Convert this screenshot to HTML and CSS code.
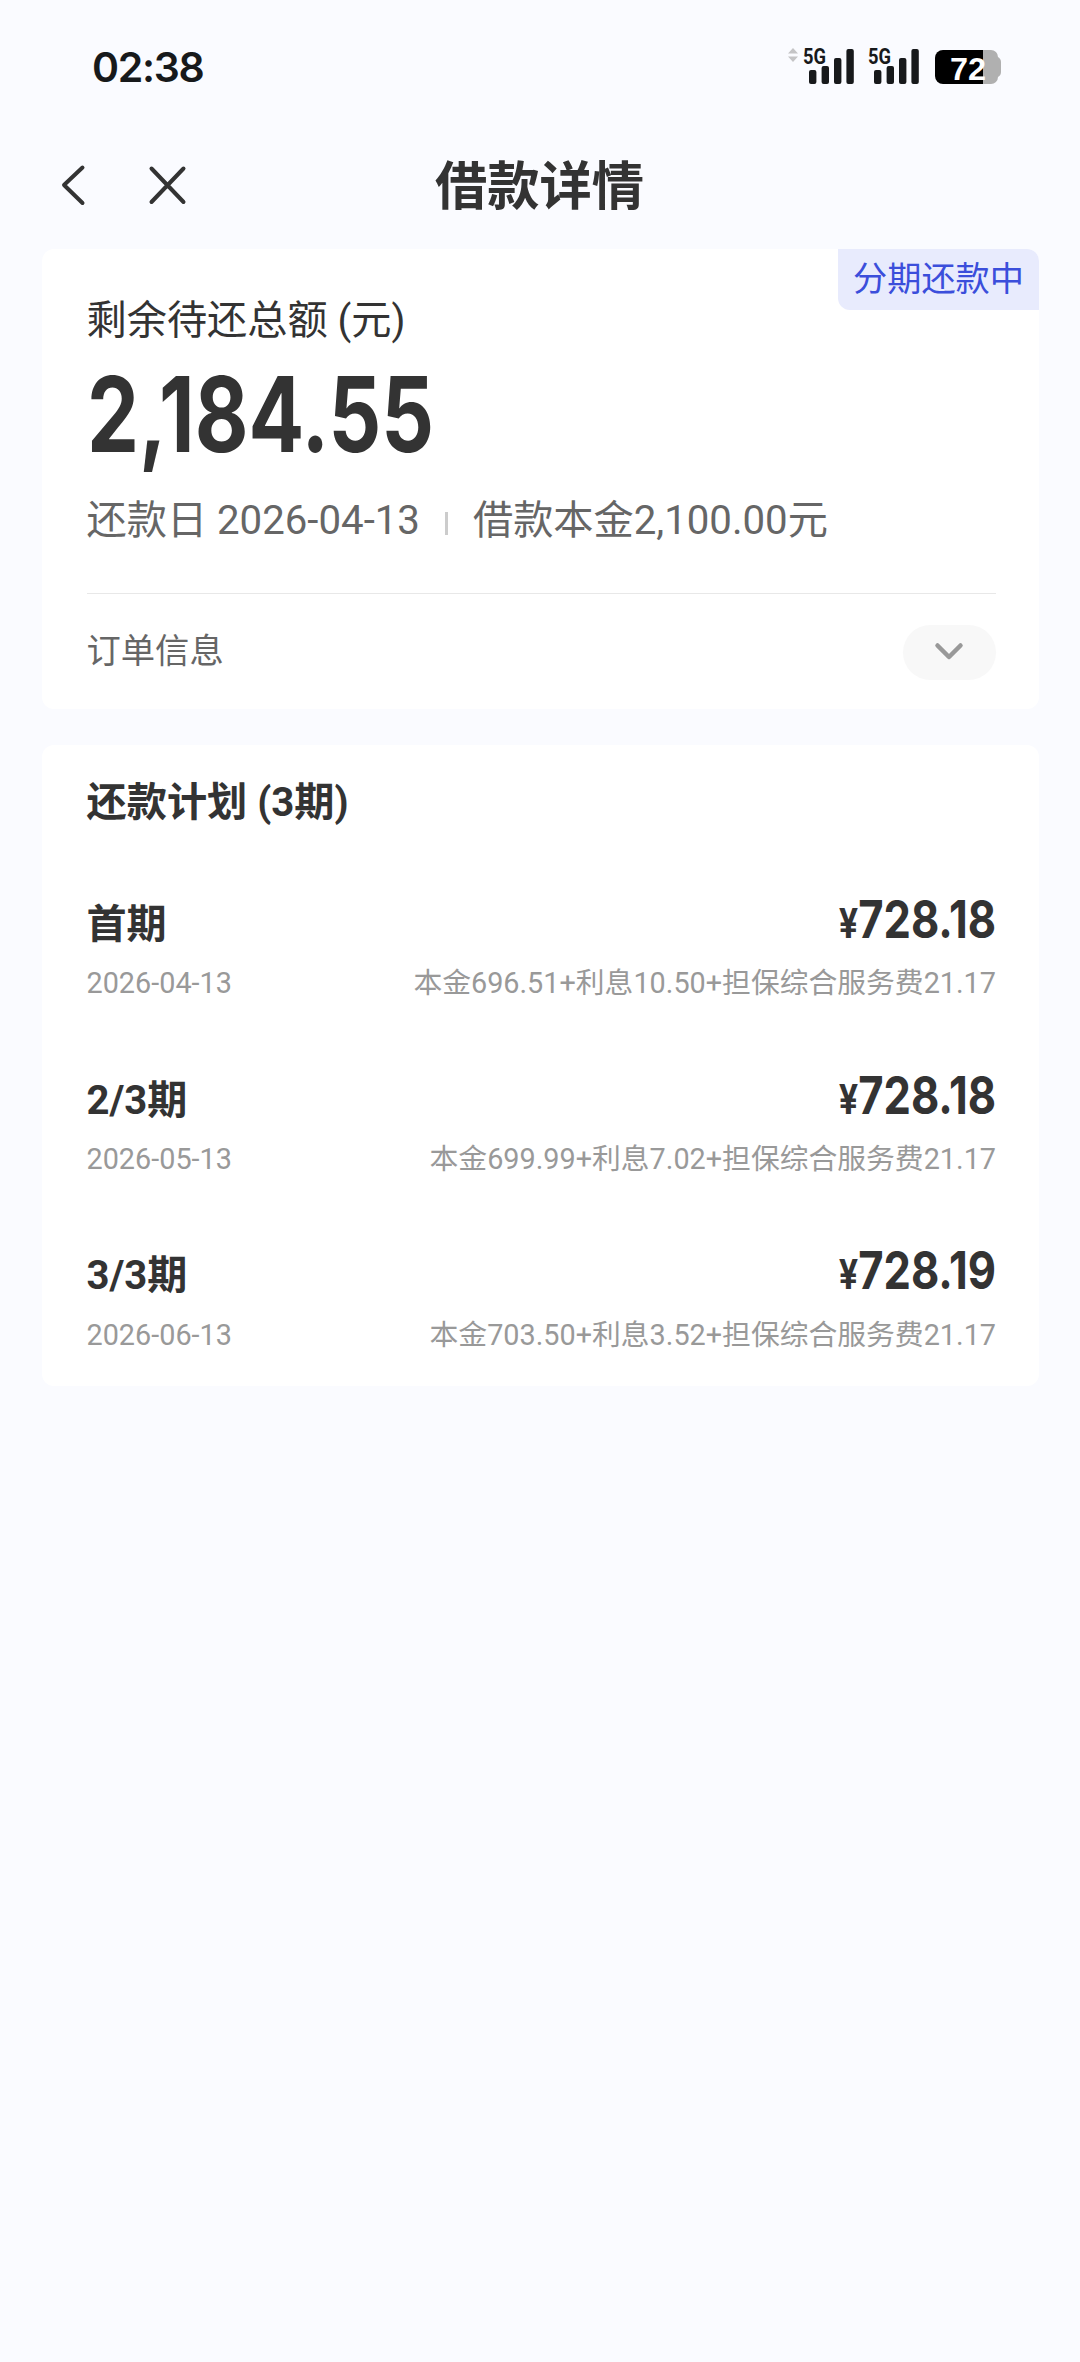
FILE: index.html
```html
<!DOCTYPE html>
<html lang="zh-CN">
<head>
<meta charset="utf-8">
<title>借款详情</title>
<link rel="stylesheet" href="styles.css">
</head>
<body>
<div class="status">
  <span class="clock">02:38</span>
  <div class="status-icons">
    <svg class="data" width="10" height="14" viewBox="0 0 10 14"><path d="M5 0 10 5.500H0zM0 8.500h10L5 14z"/></svg>
    <svg class="signal" width="52" height="42" viewBox="0 -4 52 42"><text x="0" y="17.500" textLength="23" lengthAdjust="spacingAndGlyphs">5G</text><rect x="6" y="24" width="7.400" height="14" rx="2"/><rect x="18.600" y="20" width="7.400" height="18" rx="2"/><rect x="31" y="12" width="7.400" height="26" rx="2"/><rect x="43.400" y="3" width="7.400" height="35" rx="2"/></svg>
    <svg class="signal" width="52" height="42" viewBox="0 -4 52 42"><text x="0" y="17.500" textLength="23" lengthAdjust="spacingAndGlyphs">5G</text><rect x="6" y="24" width="7.400" height="14" rx="2"/><rect x="18.600" y="20" width="7.400" height="18" rx="2"/><rect x="31" y="12" width="7.400" height="26" rx="2"/><rect x="43.400" y="3" width="7.400" height="35" rx="2"/></svg>
    <svg class="battery" width="66" height="40" viewBox="0 0 66 40"><path class="rest" d="M48 0h8a7 7 0 0 1 7 7c2 1 3 3 3 5v10c0 2-1 4-3 5a7 7 0 0 1-7 7h-8z"/><path d="M8 0h40v34H8a8 8 0 0 1-8-8V8a8 8 0 0 1 8-8z"/><text x="15" y="29.500" textLength="36" lengthAdjust="spacingAndGlyphs">72</text></svg>
  </div>
</div>
<header class="nav">
  <div class="nav-actions">
    <svg width="26" height="44" viewBox="0 0 26 44"><path d="M22.500 4.500 4 22 22.500 40"/></svg>
    <svg width="44" height="44" viewBox="0 0 44 44"><path d="M5.500 5.500 37.500 39M37.500 5.500 5.500 39"/></svg>
  </div>
  <h1>借款详情</h1>
  <div></div>
</header>
<main>
  <section class="card summary">
    <span class="badge">分期还款中</span>
    <div class="label">剩余待还总额 (元)</div>
    <div class="total"><span>2,184.55</span></div>
    <div class="meta"><span>还款日 2026-04-13</span><i class="bar"></i><span>借款本金2,100.00元</span></div>
    <hr>
    <div class="order"><span class="order-text">订单信息</span><span class="pill"><svg width="32" height="22" viewBox="0 0 32 22"><path d="M3.500 3.500 15 15 26.500 3.500"/></svg></span></div>
  </section>
  <section class="card plan">
    <h2>还款计划 (3期)</h2>
    <ul>
      <li>
        <div class="row"><span class="term">首期</span><span class="amount"><small>¥</small>728.18</span></div>
        <div class="detail"><span>2026-04-13</span><span>本金696.51+利息10.50+担保综合服务费21.17</span></div>
      </li>
      <li>
        <div class="row"><span class="term">2/3期</span><span class="amount"><small>¥</small>728.18</span></div>
        <div class="detail"><span>2026-05-13</span><span>本金699.99+利息7.02+担保综合服务费21.17</span></div>
      </li>
      <li>
        <div class="row"><span class="term">3/3期</span><span class="amount"><small>¥</small>728.19</span></div>
        <div class="detail"><span>2026-06-13</span><span>本金703.50+利息3.52+担保综合服务费21.17</span></div>
      </li>
    </ul>
  </section>
</main>
</body>
</html>
```
FILE: styles.css
```css
* { box-sizing: border-box; }
body {
  margin: 0;
  min-height: 2362px;
  background: #fafbff;
  color: #333;
  font-family: Roboto, "Noto Sans CJK SC", sans-serif;
}
h1, h2, ul { margin: 0; padding: 0; list-style: none; }

.status {
  display: flex;
  justify-content: space-between;
  height: 120px;
  padding: 46px 79px 0 92px;
}
.clock {
  font: 600 41px/42px Inter, sans-serif;
  letter-spacing: -1.3px;
  color: #17191b;
}
.status-icons { display: flex; align-items: flex-start; }
.data { margin: 2px 5px 0 0; fill: #c4c4c6; }
.signal { margin: -4px 13px 0 0; fill: #17191b; }
.signal + .battery { margin-left: 2px; }
.signal text { font: 700 21.5px Roboto, sans-serif; }
.battery { margin-top: 4px; }
.battery .rest { fill: #b0b0b0; }
.battery text { font: 700 31px "Liberation Sans", sans-serif; fill: #fff; }

.nav {
  display: grid;
  grid-template-columns: 1fr auto 1fr;
  align-items: center;
  height: 129px;
  padding: 0 61px 0 60px;
}
.nav-actions { display: flex; gap: 60px; }
.nav svg { fill: none; stroke: #333; stroke-width: 4; stroke-linecap: round; stroke-linejoin: round; }
.nav h1 { padding-top: 5px; font-size: 52.3px; line-height: 72px; font-weight: 700; }

main { display: grid; gap: 36px; padding: 0 41px 0 42px; }
.card { background: #fff; border-radius: 12px; padding: 0 43px 0 44.5px; }
.summary { position: relative; height: 460px; padding-top: 44px; }
.badge {
  position: absolute;
  top: 0;
  right: 0;
  width: 201px;
  height: 61px;
  border-radius: 0 12px 0 12px;
  background: #e8ebfd;
  color: #3b4edb;
  font-size: 34.2px;
  line-height: 61px;
  text-align: center;
}
.label { font-size: 40.2px; line-height: 56px; }
.total { margin-top: 11px; font: 700 104.5px/108px Inter, sans-serif; }
.total span { display: inline-block; transform: scaleX(.79); transform-origin: left; }
.meta {
  display: flex;
  align-items: center;
  margin-top: 25px;
  font-size: 40.2px;
  line-height: 56px;
  color: #666;
}
.bar { width: 3px; height: 23px; margin: 5px 25px 0; background: #ccc; }
hr { height: 1px; margin: 44px 0 31px; border: 0; background: #e8e8e8; }
.order {
  display: flex;
  justify-content: space-between;
  align-items: center;
  font-size: 34.3px;
  line-height: 50px;
  color: #666;
}
.order-text { padding-bottom: 4px; }
.pill {
  display: flex;
  align-items: center;
  justify-content: center;
  width: 93px;
  height: 55px;
  border-radius: 28px;
  background: #f8f8f8;
}
.pill svg { fill: none; stroke: #999; stroke-width: 4.5; stroke-linecap: round; stroke-linejoin: round; }

.plan { height: 641px; padding-top: 30px; }
.plan h2 { font-size: 40.2px; line-height: 56px; font-weight: 700; }
.plan ul { display: grid; gap: 69.2px; margin-top: 66px; }
.row { display: flex; justify-content: space-between; align-items: baseline; height: 56px; }
.term { font-size: 40.1px; line-height: 56px; font-weight: 700; }
.amount { font: 700 52.3px/44px Inter, sans-serif; transform: scaleX(.832); transform-origin: right; }
.amount small { font-size: 41px; }
.detail {
  display: flex;
  justify-content: space-between;
  margin-top: 10.4px;
  font-size: 28.8px;
  line-height: 40px;
  color: #999;
}
```
